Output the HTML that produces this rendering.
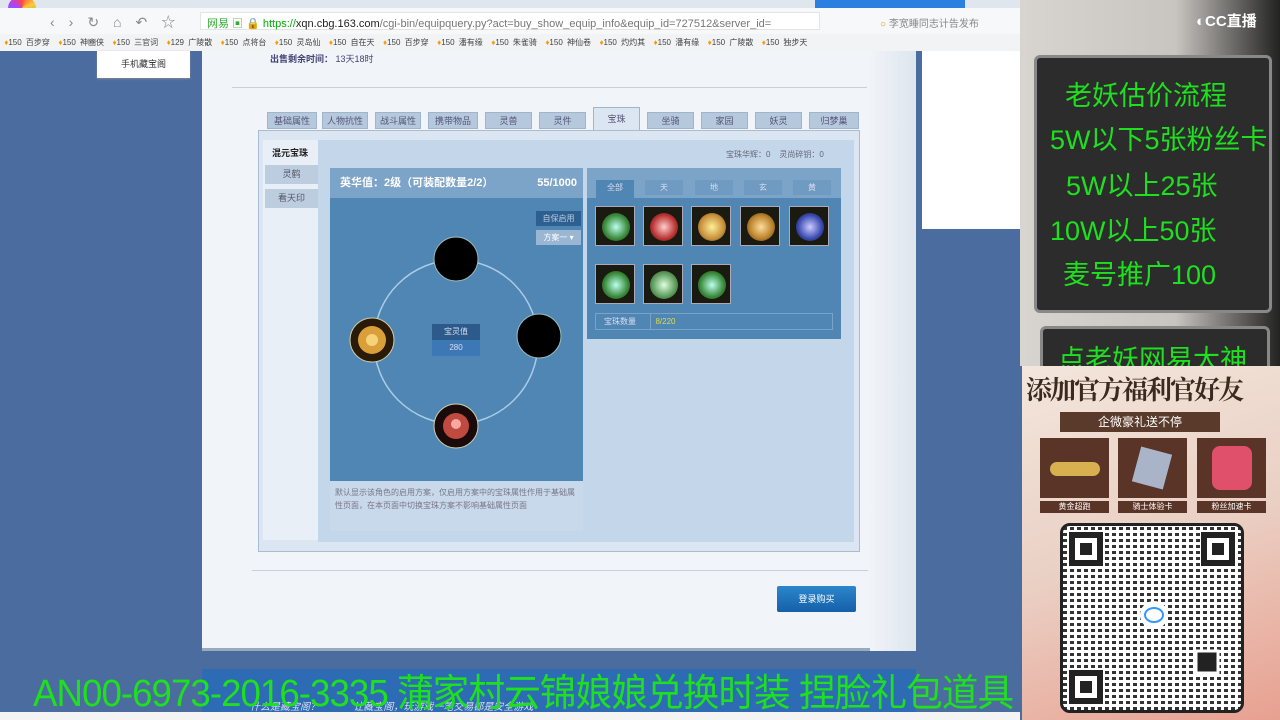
<!DOCTYPE html><html><head><meta charset="utf-8"><style>
*{margin:0;padding:0;box-sizing:border-box}
body{width:1280px;height:720px;overflow:hidden;position:relative;background:#4a6c9e;font-family:"Liberation Sans","Noto Sans CJK SC",sans-serif;font-size:10px;color:#333}
.a{position:absolute}
.tab{position:absolute;top:112px;height:17px;background:#b5c8dc;border:1px solid #9fb5cc;color:#557;font-size:9px;text-align:center;line-height:16px}
.gem{position:absolute;width:40px;height:40px;border:1px solid #aab;background:#1a1a10}
.gem i{position:absolute;left:6px;top:6px;width:28px;height:28px;border-radius:50%}
.gt{position:absolute;top:180px;height:15px;background:#6f9ac2;color:#dde;font-size:8px;text-align:center;line-height:15px}
.g{color:#1ee01e;font-size:27px;position:absolute;white-space:nowrap}
</style></head><body>
<div class="a" style="left:0;top:0;width:1020px;height:10px;background:#dfe6ee"></div>
<div class="a" style="left:815px;top:0;width:150px;height:8px;background:#2a7fe0"></div>
<div class="a" style="left:8px;top:-4px;width:28px;height:24px;border-radius:50%;background:conic-gradient(#f44,#fc3,#4c4,#39f,#a4f,#f44)"></div>
<div class="a" style="left:0;top:8px;width:1020px;height:26px;background:#f7f8fa"></div>
<div class="a" style="left:50px;top:12px;font-size:14px;color:#888;letter-spacing:14px">‹›↻⌂↶☆</div>
<div class="a" style="left:200px;top:12px;width:620px;height:18px;background:#fff;border:1px solid #e4e4e4"></div>
<div class="a" style="left:207px;top:15px;font-size:11px;color:#2a2"><span style="color:#3a3">网易 ▣ 🔒</span> <span style="color:#0a0">https://</span><span style="color:#222">xqn.cbg.163.com</span><span style="color:#777">/cgi-bin/equipquery.py?act=buy_show_equip_info&amp;equip_id=727512&amp;server_id=</span></div>
<div class="a" style="left:880px;top:15px;font-size:10px;color:#888"><span style="color:#e80">○</span> 李宽睡同志计告发布</div>
<div class="a" style="left:0;top:34px;width:1020px;height:17px;background:#f2f3f5;font-size:8px;color:#444;line-height:17px;white-space:nowrap;word-spacing:2px">&nbsp;<span style="color:#f90">♦</span>150 百步穿 &nbsp;<span style="color:#f90">♦</span>150 神豳侠 &nbsp;<span style="color:#f90">♦</span>150 三官词 &nbsp;<span style="color:#f90">♦</span>129 广陵散 &nbsp;<span style="color:#f90">♦</span>150 点将台 &nbsp;<span style="color:#f90">♦</span>150 灵岛仙 &nbsp;<span style="color:#f90">♦</span>150 自在天 &nbsp;<span style="color:#f90">♦</span>150 百步穿 &nbsp;<span style="color:#f90">♦</span>150 潘有缘 &nbsp;<span style="color:#f90">♦</span>150 朱雀骑 &nbsp;<span style="color:#f90">♦</span>150 神仙卷 &nbsp;<span style="color:#f90">♦</span>150 灼灼其 &nbsp;<span style="color:#f90">♦</span>150 潘有缘 &nbsp;<span style="color:#f90">♦</span>150 广陵散 &nbsp;<span style="color:#f90">♦</span>150 独步天</div>
<div class="a" style="left:97px;top:51px;width:93px;height:27px;background:#fff;box-shadow:0 1px 2px #889;font-size:9px;text-align:center;line-height:27px">手机藏宝阁</div>
<div class="a" style="left:202px;top:51px;width:714px;height:600px;background:#f1f4f8;border-bottom:3px solid #9ab;"></div>
<div class="a" style="left:870px;top:51px;width:46px;height:600px;background:linear-gradient(90deg,#f1f4f8,#dde5ee)"></div>
<div class="a" style="left:922px;top:51px;width:98px;height:178px;background:#fff"></div>
<div class="a" style="left:270px;top:52px;font-size:9px;color:#447"><b>出售剩余时间：</b> 13天18时</div>
<div class="a" style="left:232px;top:87px;width:635px;height:1px;background:#ccd"></div>
<div class="tab" style="left:267px;width:50px">基础属性</div>
<div class="tab" style="left:322px;width:46px">人物抗性</div>
<div class="tab" style="left:375px;width:46px">战斗属性</div>
<div class="tab" style="left:428px;width:50px">携带物品</div>
<div class="tab" style="left:485px;width:47px">灵兽</div>
<div class="tab" style="left:539px;width:47px">灵件</div>
<div class="tab" style="left:593px;top:107px;height:24px;width:47px;background:#dbe6f2;line-height:22px">宝珠</div>
<div class="tab" style="left:647px;width:47px">坐骑</div>
<div class="tab" style="left:701px;width:47px">家园</div>
<div class="tab" style="left:755px;width:47px">妖灵</div>
<div class="tab" style="left:809px;width:50px">归梦巢</div>
<div class="a" style="left:258px;top:130px;width:602px;height:422px;background:#dbe6f2;border:1px solid #a9bcd2"></div>
<div class="a" style="left:263px;top:140px;width:55px;height:400px;background:#e9eff7"></div>
<div class="a" style="left:318px;top:140px;width:536px;height:402px;background:#c4d6ea"></div>
<div class="a" style="left:272px;top:146px;font-size:9px;font-weight:bold;color:#222">混元宝珠</div>
<div class="a" style="left:265px;top:165px;width:53px;height:19px;background:#bccde0;text-align:center;line-height:19px;font-size:9px;color:#556">灵鹤</div>
<div class="a" style="left:265px;top:189px;width:53px;height:19px;background:#bccde0;text-align:center;line-height:19px;font-size:9px;color:#556">看天印</div>
<div class="a" style="left:726px;top:149px;font-size:8px;color:#667">宝珠华辉：0 &nbsp;&nbsp; 灵尚碎钥：0</div>
<div class="a" style="left:330px;top:168px;width:253px;height:313px;background:#4f86b4"></div>
<div class="a" style="left:330px;top:168px;width:253px;height:30px;background:#7ca3c8;color:#fff;font-weight:bold;font-size:11px;line-height:30px;padding-left:10px">英华值：2级（可装配数量2/2）<span style="position:absolute;right:6px">55/1000</span></div>
<div class="a" style="left:536px;top:211px;width:45px;height:15px;background:#2e5f91;color:#bcd;font-size:8px;line-height:15px;text-align:center">自保启用</div>
<div class="a" style="left:536px;top:230px;width:45px;height:15px;background:#9ab6d2;color:#fff;font-size:8px;line-height:15px;text-align:center">方案一 ▾</div>
<svg class="a" style="left:330px;top:198px" width="253" height="283">
<circle cx="126" cy="144" r="82" fill="none" stroke="#a9cbe6" stroke-width="1.5"/>
<circle cx="126" cy="61" r="22" fill="#000" stroke="#9bb" />
<circle cx="209" cy="138" r="22" fill="#000" stroke="#9bb"/>
<circle cx="42" cy="142" r="22" fill="#2a1a08" stroke="#cca"/><circle cx="42" cy="142" r="14" fill="#d9a03a"/><circle cx="42" cy="142" r="6" fill="#f6d27a"/>
<circle cx="126" cy="228" r="22" fill="#1a0a0a" stroke="#cca"/><circle cx="126" cy="228" r="13" fill="#c04a40"/><circle cx="126" cy="226" r="5" fill="#f8a8a0"/>
</svg>
<div class="a" style="left:432px;top:324px;width:48px;height:16px;background:#2c5a8a;color:#dde;font-size:8px;text-align:center;line-height:16px">宝灵值</div>
<div class="a" style="left:432px;top:340px;width:48px;height:16px;background:#3d78b6;color:#dde;font-size:8px;text-align:center;line-height:16px">280</div>
<div class="a" style="left:330px;top:481px;width:253px;height:50px;background:#c9d9ec;color:#778;font-size:8px;line-height:13px;padding:5px 5px">默认显示该角色的启用方案，仅启用方案中的宝珠属性作用于基础属性页面，在本页面中切换宝珠方案不影响基础属性页面</div>
<div class="a" style="left:587px;top:168px;width:254px;height:171px;background:#4f86b4"></div>
<div class="a" style="left:587px;top:168px;width:254px;height:30px;background:#7ca3c8"></div>
<div class="gt" style="left:596px;top:180px;height:18px;width:38px;background:#4f86b4">全部</div>
<div class="gt" style="left:645px;width:38px">天</div>
<div class="gt" style="left:695px;width:38px">地</div>
<div class="gt" style="left:744px;width:38px">玄</div>
<div class="gt" style="left:793px;width:38px">黄</div>
<div class="gem" style="left:595px;top:206px"><i style="background:radial-gradient(#bfe,#3a8a3a 60%,#1a3a1a)"></i></div>
<div class="gem" style="left:643px;top:206px"><i style="background:radial-gradient(#fcc,#b33 60%,#311)"></i></div>
<div class="gem" style="left:691px;top:206px"><i style="background:radial-gradient(#fe9,#c8903a 60%,#432)"></i></div>
<div class="gem" style="left:740px;top:206px"><i style="background:radial-gradient(#fd9,#b8802a 60%,#321)"></i></div>
<div class="gem" style="left:789px;top:206px"><i style="background:radial-gradient(#ccf,#3a4ab0 60%,#113)"></i></div>
<div class="gem" style="left:595px;top:264px"><i style="background:radial-gradient(#bfe,#3a8a3a 60%,#1a3a1a)"></i></div>
<div class="gem" style="left:643px;top:264px"><i style="background:radial-gradient(#dfd,#5a9a5a 60%,#2a4a2a)"></i></div>
<div class="gem" style="left:691px;top:264px"><i style="background:radial-gradient(#bfe,#3a8a3a 60%,#1a3a1a)"></i></div>
<div class="a" style="left:595px;top:313px;width:238px;height:17px;border:1px solid #7aa3c8;font-size:8px;line-height:15px;color:#dde"><span style="display:inline-block;width:55px;padding-left:8px;border-right:1px solid #7aa3c8">宝珠数量</span> &nbsp;<span style="color:#dd4">8/220</span></div>
<div class="a" style="left:252px;top:570px;width:616px;height:1px;background:#ccd"></div>
<div class="a" style="left:777px;top:586px;width:79px;height:26px;background:linear-gradient(#2c86cc,#1460a8);border-radius:2px;color:#fff;font-size:9px;text-align:center;line-height:26px">登录购买</div>
<div class="a" style="left:202px;top:669px;width:714px;height:51px;background:#2d6bb4"></div>
<div class="a" style="left:250px;top:698px;color:#dde;font-size:10px;font-style:italic">什么是藏宝阁？ &nbsp;&nbsp;&nbsp;&nbsp;&nbsp;&nbsp;&nbsp;&nbsp;&nbsp;&nbsp; 让藏宝阁，玩游戏一笔交易都是安全游戏</div>
<div class="a" style="left:0;top:712px;width:1020px;height:8px;background:#f4f4f4"></div>
<div class="g" style="left:33px;top:662px;font-size:38px;transform:scaleX(0.965);transform-origin:0 0;letter-spacing:-1px">AN00-6973-2016-3335 蒲家村云锦娘娘兑换时装 捏脸礼包道具</div>
<div class="a" style="left:1020px;top:0;width:260px;height:366px;background:linear-gradient(90deg,#d8d4d0,#c8c4c0 60%,#222)"></div>
<div class="a" style="left:1034px;top:55px;width:238px;height:258px;background:#2c2c2c;border:3px solid #888;border-radius:6px"></div>
<div class="a" style="left:1040px;top:326px;width:230px;height:60px;background:#2c2c2c;border:3px solid #888;border-radius:6px"></div>
<div class="a" style="left:1196px;top:10px;color:#fff;font-size:15px;font-weight:bold">◐CC直播</div>
<div class="g" style="left:1065px;top:74px">老妖估价流程</div>
<div class="g" style="left:1050px;top:118px">5W以下5张粉丝卡</div>
<div class="g" style="left:1066px;top:164px">5W以上25张</div>
<div class="g" style="left:1050px;top:209px">10W以上50张</div>
<div class="g" style="left:1063px;top:253px">麦号推广100</div>
<div class="g" style="left:1058px;top:338px">点老妖网易大神</div>
<div class="a" style="left:1022px;top:366px;width:258px;height:354px;background:linear-gradient(160deg,#f3e6dc,#ead0c4 50%,#e8a090)"></div>
<div class="a" style="left:1026px;top:370px;font-size:26px;color:#3a2a20;font-family:'Noto Serif CJK SC',serif;font-weight:bold;letter-spacing:-2px;white-space:nowrap">添加官方福利官好友</div>
<div class="a" style="left:1060px;top:412px;width:160px;height:20px;background:#5a3a2a;color:#fff;font-size:12px;text-align:center;line-height:20px">企微豪礼送不停</div>
<div class="a" style="left:1040px;top:438px;width:69px;height:60px;background:#5a3426"></div>
<div class="a" style="left:1118px;top:438px;width:69px;height:60px;background:#5a3426"></div>
<div class="a" style="left:1197px;top:438px;width:69px;height:60px;background:#5a3426"></div>
<div class="a" style="left:1050px;top:462px;width:50px;height:14px;background:#d8b050;border-radius:8px"></div>
<div class="a" style="left:1136px;top:450px;width:32px;height:36px;background:#aab4c8;transform:rotate(15deg)"></div>
<div class="a" style="left:1212px;top:446px;width:40px;height:44px;background:#e0506a;border-radius:8px"></div>
<div class="a" style="left:1040px;top:501px;width:69px;height:12px;background:#5a3426;color:#fff;font-size:8px;text-align:center;line-height:12px">黄金超跑</div>
<div class="a" style="left:1118px;top:501px;width:69px;height:12px;background:#5a3426;color:#fff;font-size:8px;text-align:center;line-height:12px">骑士体验卡</div>
<div class="a" style="left:1197px;top:501px;width:69px;height:12px;background:#5a3426;color:#fff;font-size:8px;text-align:center;line-height:12px">粉丝加速卡</div>
<div class="a" style="left:1060px;top:523px;width:184px;height:190px;background:#fff;border:3px solid #222;border-radius:10px;
background-image:repeating-linear-gradient(90deg,transparent 0 4px,#fff 4px 7px),repeating-linear-gradient(0deg,#333 0 3px,#fff 3px 6px)"></div>
<svg class="a" style="left:1060px;top:523px" width="184" height="190">
<g fill="none" stroke="#222" stroke-width="6"><rect x="12" y="12" width="28" height="28" fill="#fff"/><rect x="144" y="12" width="28" height="28" fill="#fff"/><rect x="12" y="150" width="28" height="28" fill="#fff"/></g>
<g fill="#222"><rect x="20" y="20" width="12" height="12"/><rect x="152" y="20" width="12" height="12"/><rect x="20" y="158" width="12" height="12"/><rect x="136" y="128" width="22" height="22"/></g>
<rect x="136" y="128" width="22" height="22" fill="none" stroke="#fff" stroke-width="3"/>
<circle cx="94" cy="92" r="14" fill="#fff"/><ellipse cx="94" cy="92" rx="9" ry="7" fill="none" stroke="#39f" stroke-width="2"/>
</svg>
</body></html>
